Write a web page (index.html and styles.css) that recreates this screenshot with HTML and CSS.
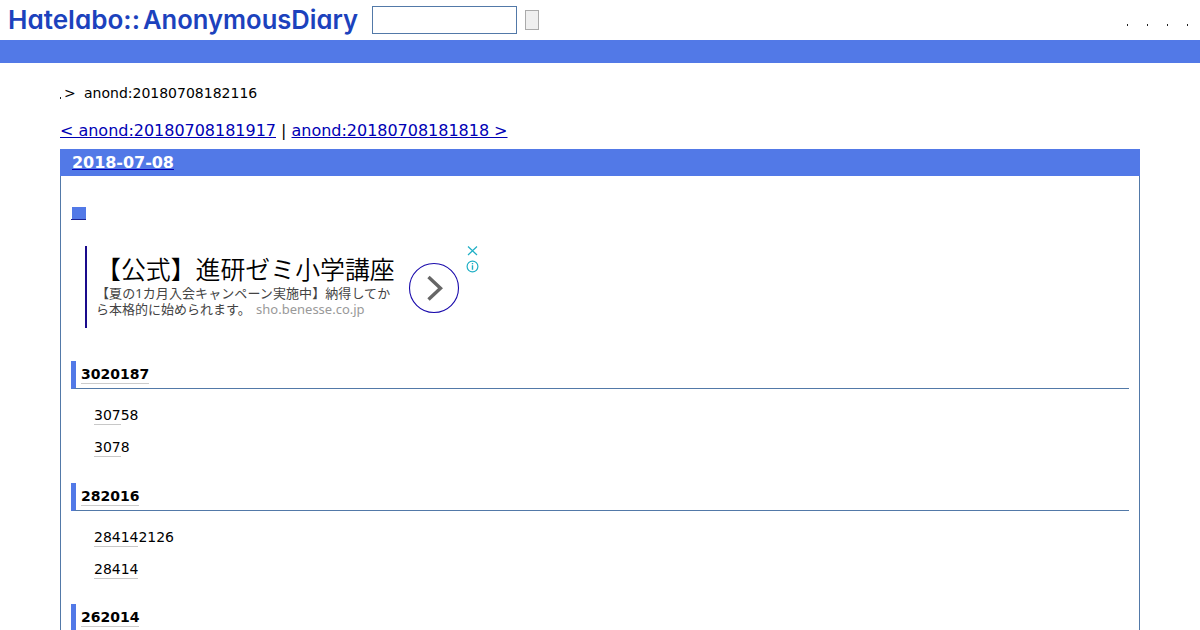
FILE: index.html
```
<!DOCTYPE html>
<html lang="ja">
<head>
<meta charset="utf-8">
<title>anond:20180708182116</title>
<link rel="stylesheet" href="styles.css">
</head>
<body>
<header class="top">
  <svg class="logo" width="364" height="40" viewBox="0 0 364 40">
    <text x="8" y="29" textLength="132" lengthAdjust="spacingAndGlyphs">Hatelabo::</text>
    <text x="143" y="29" textLength="215" lengthAdjust="spacingAndGlyphs">AnonymousDiary</text>
  </svg>
  <input class="search" type="text" aria-label="search">
  <button class="go" aria-label="go"></button>
  <nav class="menu"><i></i><i></i><i></i><i></i></nav>
</header>
<div class="band"></div>
<main class="page">
  <div class="crumbs"><i></i><span class="gt">&gt;</span><span>anond:20180708182116</span></div>
  <div class="pager"><a href="#">&lt; anond:20180708181917</a> | <a href="#">anond:20180708181818 &gt;</a></div>
  <section class="day">
    <h2 class="date"><a href="#">2018-07-08</a></h2>
    <div class="body">
      <a class="mark" href="#"><span></span></a>
      <div class="ad">
        <div class="ad-text">
          <div class="ad-title">【公式】進研ゼミ小学講座</div>
          <div class="ad-line first">【夏の1カ月入会キャンペーン実施中】納得してか</div>
          <div class="ad-line">ら本格的に始められます。 <span class="ad-url">sho.benesse.co.jp</span></div>
        </div>
        <svg class="arrow" width="52" height="52" viewBox="0 0 52 52"><circle cx="26" cy="26" r="24.5" fill="none" stroke="#1a0bac" stroke-width="1.1"/><path d="M20.5 15L32.5 26.2L20.5 37.5" fill="none" stroke="#666" stroke-width="3.4"/></svg>
        <svg class="choices" width="14" height="30" viewBox="0 0 14 30" fill="none" stroke="#1fafc5" stroke-width="1.2"><path d="M3 1.5L12 10M12 1.5L3 10"/><circle cx="7.5" cy="21.5" r="5.4"/><path d="M7.5 20.2V24.8M7.5 18V19.2" stroke-width="1.4"/></svg>
      </div>
      <h3 class="head"><span>3020187</span></h3>
      <p class="item"><u>307</u>58</p>
      <p class="item"><u>307</u>8</p>
      <h3 class="head"><span>282016</span></h3>
      <p class="item"><u>28414</u>2126</p>
      <p class="item last"><u>28414</u></p>
      <h3 class="head"><span>262014</span></h3>
    </div>
  </section>
</main>
</body>
</html>
```
FILE: styles.css
```
* { box-sizing: border-box; }
body { margin: 0; height: 630px; overflow: hidden; background: #fff; color: #000; font: 14px/20px "DejaVu Sans", sans-serif; }
.top { display: flex; align-items: center; height: 40px; }
.logo { display: block; margin-right: 8px; font: 600 26px Inter, sans-serif; font-feature-settings: "cv11"; fill: #1c42bd; }
.search { width: 145px; height: 28px; border: 1px solid #5279a8; margin: 0 8px 0 0; padding: 0; }
.go { width: 14px; height: 20px; border: 1px solid #aaa; background: #efefef; padding: 0; }
.menu { display: flex; gap: 19px; margin: 9px 12px 0 auto; }
.menu i, .crumbs i { width: 1px; height: 2px; background: #222; }
.band { height: 23px; background: #5279e7; }
.page { height: 567px; padding: 20px 60px 0; }
.crumbs { display: flex; height: 20px; }
.crumbs i { margin: 14px 3px 0 0; }
.gt { width: 20px; }
.pager { margin-top: 18px; font-size: 16px; line-height: 20px; letter-spacing: -.02px; }
.pager a { color: #0000b4; }
.day { margin-top: 8px; border: 1px solid #5279a8; border-width: 0 1px; height: 481px; }
.date { margin: 0 -1px; height: 27px; padding-left: 12px; background: #5279e7; font-size: 16px; line-height: 27px; letter-spacing: -.04px; }
.date a { color: #fff; text-decoration-color: #0000b4; }
.body { padding: 31px 10px 0; }
.mark { display: block; width: 15px; height: 13px; padding-left: 1px; border-bottom: 1px solid #1b2291; }
.mark span { display: block; width: 14px; height: 12px; background: #5279e7; }
.ad { display: flex; width: 410px; height: 82px; margin: 26px 0 33px 14px; border-left: 2px solid #1a0b8c; }
.ad-text { width: 311px; padding: 7px 0 0 9px; white-space: nowrap; }
.ad-title { height: 32px; font: 350 24.9px/30px "Noto Sans CJK JP", sans-serif; }
.ad-line { height: 16px; font: 13px/16px "Noto Sans", "Noto Sans CJK JP", sans-serif; color: #444; }
.first { letter-spacing: .08px; }
.ad-url { color: #999; margin-left: 2px; }
.arrow { margin: 16px 5px 0 10px; }
.choices { margin-top: -1px; }
.head { height: 28px; margin: 0; padding-left: 5px; border-left: 5px solid #5279e7; border-bottom: 1px solid #5279a8; font-size: 14px; line-height: 26px; }
.head span { display: inline-block; height: 23px; border-bottom: 1px solid #ccc; }
.item { margin: 0 0 12px 23px; height: 20px; letter-spacing: -.03px; }
.item u { display: inline-block; height: 20px; text-decoration: none; border-bottom: 1px solid #c8c8c8; }
.head + .item { margin-top: 16px; }
.item + .head { margin-top: 26px; }
.last + .head { margin-top: 25px; }
```
